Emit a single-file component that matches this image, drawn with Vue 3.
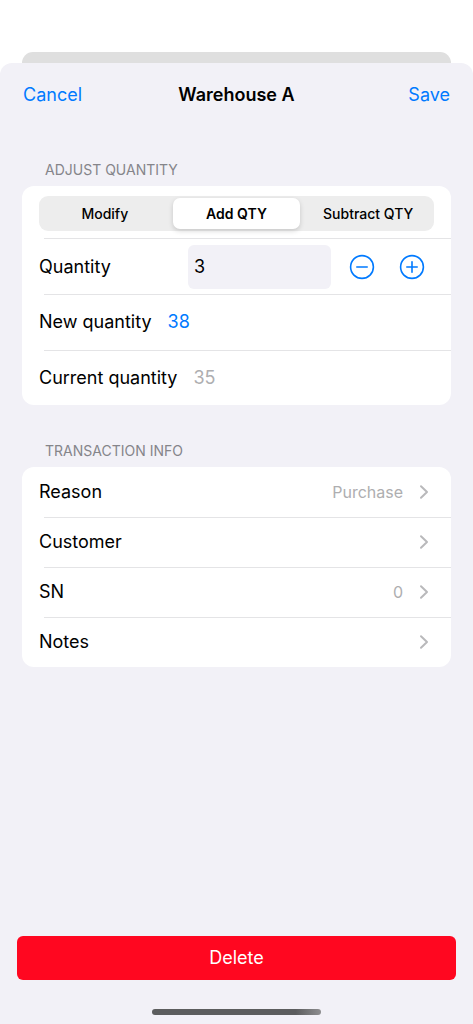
<template>
  <div class="screen">
    <div class="sheet-behind"></div>
    <main class="sheet">
      <header class="nav">
        <button type="button" class="nav-btn" @click="reset">Cancel</button>
        <h1 class="nav-title">Warehouse A</h1>
        <button type="button" class="nav-btn nav-save">Save</button>
      </header>

      <section class="section adjust">
        <h2 class="section-title">ADJUST QUANTITY</h2>
        <div class="card">
          <div class="row row-segment">
            <div class="segment" role="group" aria-label="Adjust mode">
              <button
                v-for="item in modes"
                :key="item.key"
                type="button"
                class="segment-btn"
                :class="{ active: mode === item.key }"
                :aria-pressed="mode === item.key"
                @click="mode = item.key"
              >{{ item.label }}</button>
            </div>
          </div>
          <div class="row row-tall row-quantity">
            <label class="label quantity-label" for="quantity">Quantity</label>
            <input id="quantity" v-model.number="quantity" class="quantity-input" type="text" inputmode="numeric" />
            <button type="button" class="step-btn" aria-label="Decrease" @click="step(-1)">
              <svg viewBox="0 0 26 26" width="26" height="26">
                <circle cx="13" cy="13" r="11.4" />
                <path d="M7.8 13h10.4" />
              </svg>
            </button>
            <button type="button" class="step-btn" aria-label="Increase" @click="step(1)">
              <svg viewBox="0 0 26 26" width="26" height="26">
                <circle cx="13" cy="13" r="11.4" />
                <path d="M7.8 13h10.4M13 7.8v10.4" />
              </svg>
            </button>
          </div>
          <div class="row row-tall">
            <span class="label">New quantity</span>
            <span class="new-value">{{ newQuantity }}</span>
          </div>
          <div class="row row-tall">
            <span class="label">Current quantity</span>
            <span class="current-value">{{ current }}</span>
          </div>
        </div>
      </section>

      <section class="section info">
        <h2 class="section-title">TRANSACTION INFO</h2>
        <div class="card">
          <button v-for="item in infoRows" :key="item.label" type="button" class="row row-link">
            <span class="label">{{ item.label }}</span>
            <span class="row-value">{{ item.value }}</span>
            <svg class="chevron" viewBox="0 0 10 16" width="10" height="16">
              <path d="M2 2.2l6 5.8-6 5.8" />
            </svg>
          </button>
        </div>
      </section>

      <footer class="footer">
        <button type="button" class="delete-btn">Delete</button>
        <div class="home-indicator"></div>
      </footer>
    </main>
  </div>
</template>

<script setup>
import { ref, computed } from 'vue'

const modes = [
  { key: 'modify', label: 'Modify' },
  { key: 'add', label: 'Add QTY' },
  { key: 'subtract', label: 'Subtract QTY' }
]

const infoRows = [
  { label: 'Reason', value: 'Purchase' },
  { label: 'Customer', value: '' },
  { label: 'SN', value: '0' },
  { label: 'Notes', value: '' }
]

const mode = ref('add')
const quantity = ref(3)
const current = ref(35)

const newQuantity = computed(() => {
  const n = Number(quantity.value) || 0
  if (mode.value === 'add') return current.value + n
  if (mode.value === 'subtract') return current.value - n
  return n
})

function step(n) {
  quantity.value = Math.max(0, (Number(quantity.value) || 0) + n)
}

function reset() {
  mode.value = 'add'
  quantity.value = 3
}
</script>

<style>
body {
  background: #fff;
}
</style>

<style scoped>
.screen {
  display: flex;
  flex-direction: column;
  min-height: 100vh;
  box-sizing: border-box;
  padding-top: 52px;
  font-family: Inter, "Liberation Sans", sans-serif;
  font-size: 18px;
  line-height: 24px;
  color: #000;
}

button {
  border: 0;
  padding: 0;
  background: none;
  font: inherit;
  color: inherit;
  cursor: pointer;
}

.sheet-behind {
  height: 24px;
  margin: 0 22px -13px;
  border-radius: 11px 11px 0 0;
  background: #dfdfdf;
}

.sheet {
  position: relative;
  flex: 1;
  display: flex;
  flex-direction: column;
  border-radius: 12px 12px 0 0;
  background: #f2f1f7;
}

.nav {
  display: grid;
  grid-template-columns: 1fr auto 1fr;
  align-items: center;
  padding: 20px 23px;
}

.nav-btn {
  justify-self: start;
  color: #007aff;
}

.nav-save {
  justify-self: end;
}

.nav-title {
  margin: 0;
  font-size: 18px;
  font-weight: 600;
}

.section {
  padding: 0 22px;
}

.adjust {
  margin-top: 33px;
}

.info {
  margin-top: 36px;
}

.section-title {
  margin: 0 0 6px 23px;
  font-size: 14px;
  line-height: 20px;
  font-weight: 400;
  color: #85858a;
}

.card {
  overflow: hidden;
  border-radius: 12px;
  background: #fff;
}

.row {
  display: flex;
  align-items: center;
  box-sizing: border-box;
  width: 100%;
  height: 50px;
  padding: 0 22px 0 17px;
  text-align: left;
}

/* inset separator */
.row + .row {
  background: linear-gradient(#e4e4e6, #e4e4e6) 22px 0 / 100% 1px no-repeat;
}

.row-segment {
  height: 52px;
  padding: 3px 17px 0;
}

.segment {
  flex: 1;
  display: grid;
  grid-template-columns: repeat(3, 1fr);
  height: 35px;
  box-sizing: border-box;
  padding: 2px 0;
  border-radius: 9px;
  background: #ededed;
}

.segment-btn {
  margin: 0 2px;
  border-radius: 7px;
  font-size: 14px;
  line-height: 20px;
  font-weight: 500;
}

.segment-btn.active {
  background: #fff;
  box-shadow: 0 2px 5px rgba(0, 0, 0, 0.16);
  font-weight: 600;
}

.row-tall {
  height: 56px;
}

.row-tall:last-child {
  height: 55px;
}

.row-quantity {
  padding-top: 1px;
  padding-right: 26px;
}

.quantity-label {
  width: 149px;
}

.quantity-input {
  flex: 1;
  min-width: 0;
  height: 44px;
  box-sizing: border-box;
  margin-right: 18px;
  padding: 0 6px;
  border: 0;
  border-radius: 6px;
  background: #f2f1f7;
  font: inherit;
  color: inherit;
}

.step-btn {
  width: 26px;
  height: 26px;
}

.step-btn + .step-btn {
  margin-left: 24px;
}

.step-btn svg {
  display: block;
  fill: none;
  stroke: #007aff;
  stroke-width: 1.6;
  stroke-linecap: round;
}

.new-value {
  margin-left: 16px;
  color: #007aff;
}

.current-value {
  margin-left: 16px;
  color: #aeaeb0;
}

.row-value {
  margin-left: auto;
  font-size: 16px;
  color: #aeaeb0;
}

.chevron {
  margin-left: 16px;
  fill: none;
  stroke: #b9b9bb;
  stroke-width: 2;
  stroke-linecap: round;
  stroke-linejoin: round;
}

.footer {
  margin-top: auto;
  padding: 24px 17px 9px;
}

.delete-btn {
  display: block;
  width: 100%;
  height: 44px;
  border-radius: 6px;
  background: #ff0720;
  color: #fff;
}

.home-indicator {
  width: 169px;
  height: 6px;
  margin: 29px auto 0;
  border-radius: 3px;
  background: linear-gradient(90deg, #5c5d5e 0%, #5c5d5e 85%, #8e8e90 100%);
}
</style>
